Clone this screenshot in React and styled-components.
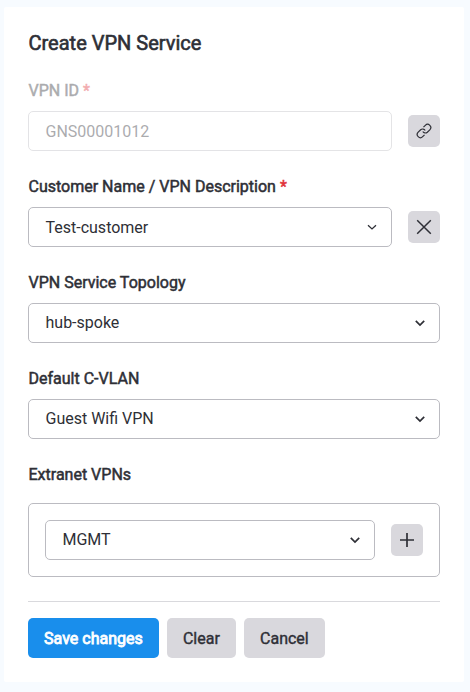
import React from 'react';
import styled, { createGlobalStyle, css } from 'styled-components';

const GlobalStyle = createGlobalStyle`
  *, *::before, *::after { box-sizing: border-box; }
  body { margin: 0; background: #f7fbff; }
`;

const Page = styled.main`
  min-height: 692px;
  padding: 7px 6px 10px 4px;
  background: #f7fbff;
  font-family: Roboto, sans-serif;
  color: #2e2f36;
`;

const Card = styled.form`
  height: 675px;
  padding: 24px;
  background: #fff;
  border-radius: 2px;
`;

const Title = styled.h1`
  margin: 0 0 24px;
  padding-left: 0.5px;
  font-size: 20px;
  line-height: 24px;
  font-weight: 400;
  -webkit-text-stroke: 0.6px currentColor;
`;

const Field = styled.div`
  margin-bottom: 24px;
`;

const Label = styled.label`
  display: block;
  margin-bottom: ${(p) => (p.$spacious ? 16 : 8)}px;
  padding-left: 0.5px;
  font-size: 16px;
  line-height: 24px;
  font-weight: 400;
  -webkit-text-stroke: 0.5px currentColor;
  opacity: ${(p) => (p.$disabled ? 0.4 : 1)};
`;

const Required = styled.span`
  color: #e03238;
`;

const Row = styled.div`
  display: flex;
  align-items: center;
  gap: 16px;
`;

const Control = styled.div`
  flex: 1;
  height: 40px;
  display: flex;
  align-items: center;
  justify-content: space-between;
  padding: 0 13px 0 16.5px;
  border: 1px solid #bbbbc1;
  border-radius: 5px;
  font-size: 16px;
  font-weight: 400;
  ${(p) => p.$disabled && css`opacity: 0.4;`}
`;

const Value = styled.span`
  padding-bottom: ${(p) => (p.$raised ? 2 : 0)}px;
`;

const IconButton = styled.button`
  width: 32px;
  height: 32px;
  padding: 0;
  display: flex;
  align-items: center;
  justify-content: center;
  border: 0;
  border-radius: 5px;
  background: #d9d8dd;
  color: #2e2f36;
`;

const Group = styled.div`
  padding: 16px;
  border: 1px solid #bbbbc1;
  border-radius: 5px;
`;

const Divider = styled.hr`
  margin: 0 0 16px;
  border: 0;
  border-top: 1px solid #d9d9dd;
`;

const Actions = styled.div`
  display: flex;
  gap: 8px;
`;

const Button = styled.button`
  height: 40px;
  padding: 0 16.1px;
  border: 0;
  border-radius: 5px;
  font: 400 16px Roboto, sans-serif;
  -webkit-text-stroke: ${(p) => (p.$primary ? 0.8 : 0.4)}px currentColor;
  background: ${(p) => (p.$primary ? '#198eec' : '#d9d8dd')};
  color: ${(p) => (p.$primary ? '#fff' : '#2e2f36')};
`;

const Chevron = ({ thin }) => (
  <svg width="12" height="12" viewBox="0 0 12 12" fill="none" stroke="currentColor" strokeWidth={thin ? 1.3 : 1.7}>
    <path d={thin ? 'M2 4.2l4 3.7 4-3.7' : 'M1.8 3.8L6 8l4.2-4.2'} />
  </svg>
);

function Select({ value, thin }) {
  return (
    <Control>
      <Value $raised={!thin}>{value}</Value>
      <Chevron thin={thin} />
    </Control>
  );
}

export default function App() {
  return (
    <Page>
      <GlobalStyle />
      <Card>
        <Title>Create VPN Service</Title>
        <Field>
          <Label $disabled>VPN ID <Required>*</Required></Label>
          <Row>
            <Control $disabled>GNS00001012</Control>
            <IconButton type="button" aria-label="Generate">
              <svg width="16" height="16" viewBox="0 0 24 24" fill="none" stroke="currentColor" strokeWidth="1.8">
                <path d="M10.2 12.8a4.5 4.5 0 0 0 6.8 1.1l3.7-3.7a4.6 4.6 0 0 0-6.7-6.7l-2.8 2.8" />
                <path d="M13.8 11.2a4.5 4.5 0 0 0-6.8-1.1l-3.7 3.7a4.6 4.6 0 0 0 6.7 6.7l2.8-2.8" />
              </svg>
            </IconButton>
          </Row>
        </Field>
        <Field>
          <Label>Customer Name / VPN Description <Required>*</Required></Label>
          <Row>
            <Select value="Test-customer" thin />
            <IconButton type="button" aria-label="Clear customer">
              <svg width="16" height="16" viewBox="0 0 16 16" stroke="currentColor" strokeWidth="1.5"><path d="M1.2 1.2l13.6 13.6M14.8 1.2L1.2 14.8" /></svg>
            </IconButton>
          </Row>
        </Field>
        <Field><Label>VPN Service Topology</Label><Select value="hub-spoke" /></Field>
        <Field><Label>Default C-VLAN</Label><Select value="Guest Wifi VPN" /></Field>
        <Field>
          <Label $spacious>Extranet VPNs</Label>
          <Group>
            <Row>
              <Select value="MGMT" />
              <IconButton type="button" aria-label="Add VPN">
                <svg width="16" height="16" viewBox="0 0 16 16" stroke="currentColor" strokeWidth="1.7"><path d="M8 1v14M1 8h14" /></svg>
              </IconButton>
            </Row>
          </Group>
        </Field>
        <Divider />
        <Actions>
          <Button type="button" $primary>Save changes</Button>
          <Button type="button">Clear</Button>
          <Button type="button">Cancel</Button>
        </Actions>
      </Card>
    </Page>
  );
}
